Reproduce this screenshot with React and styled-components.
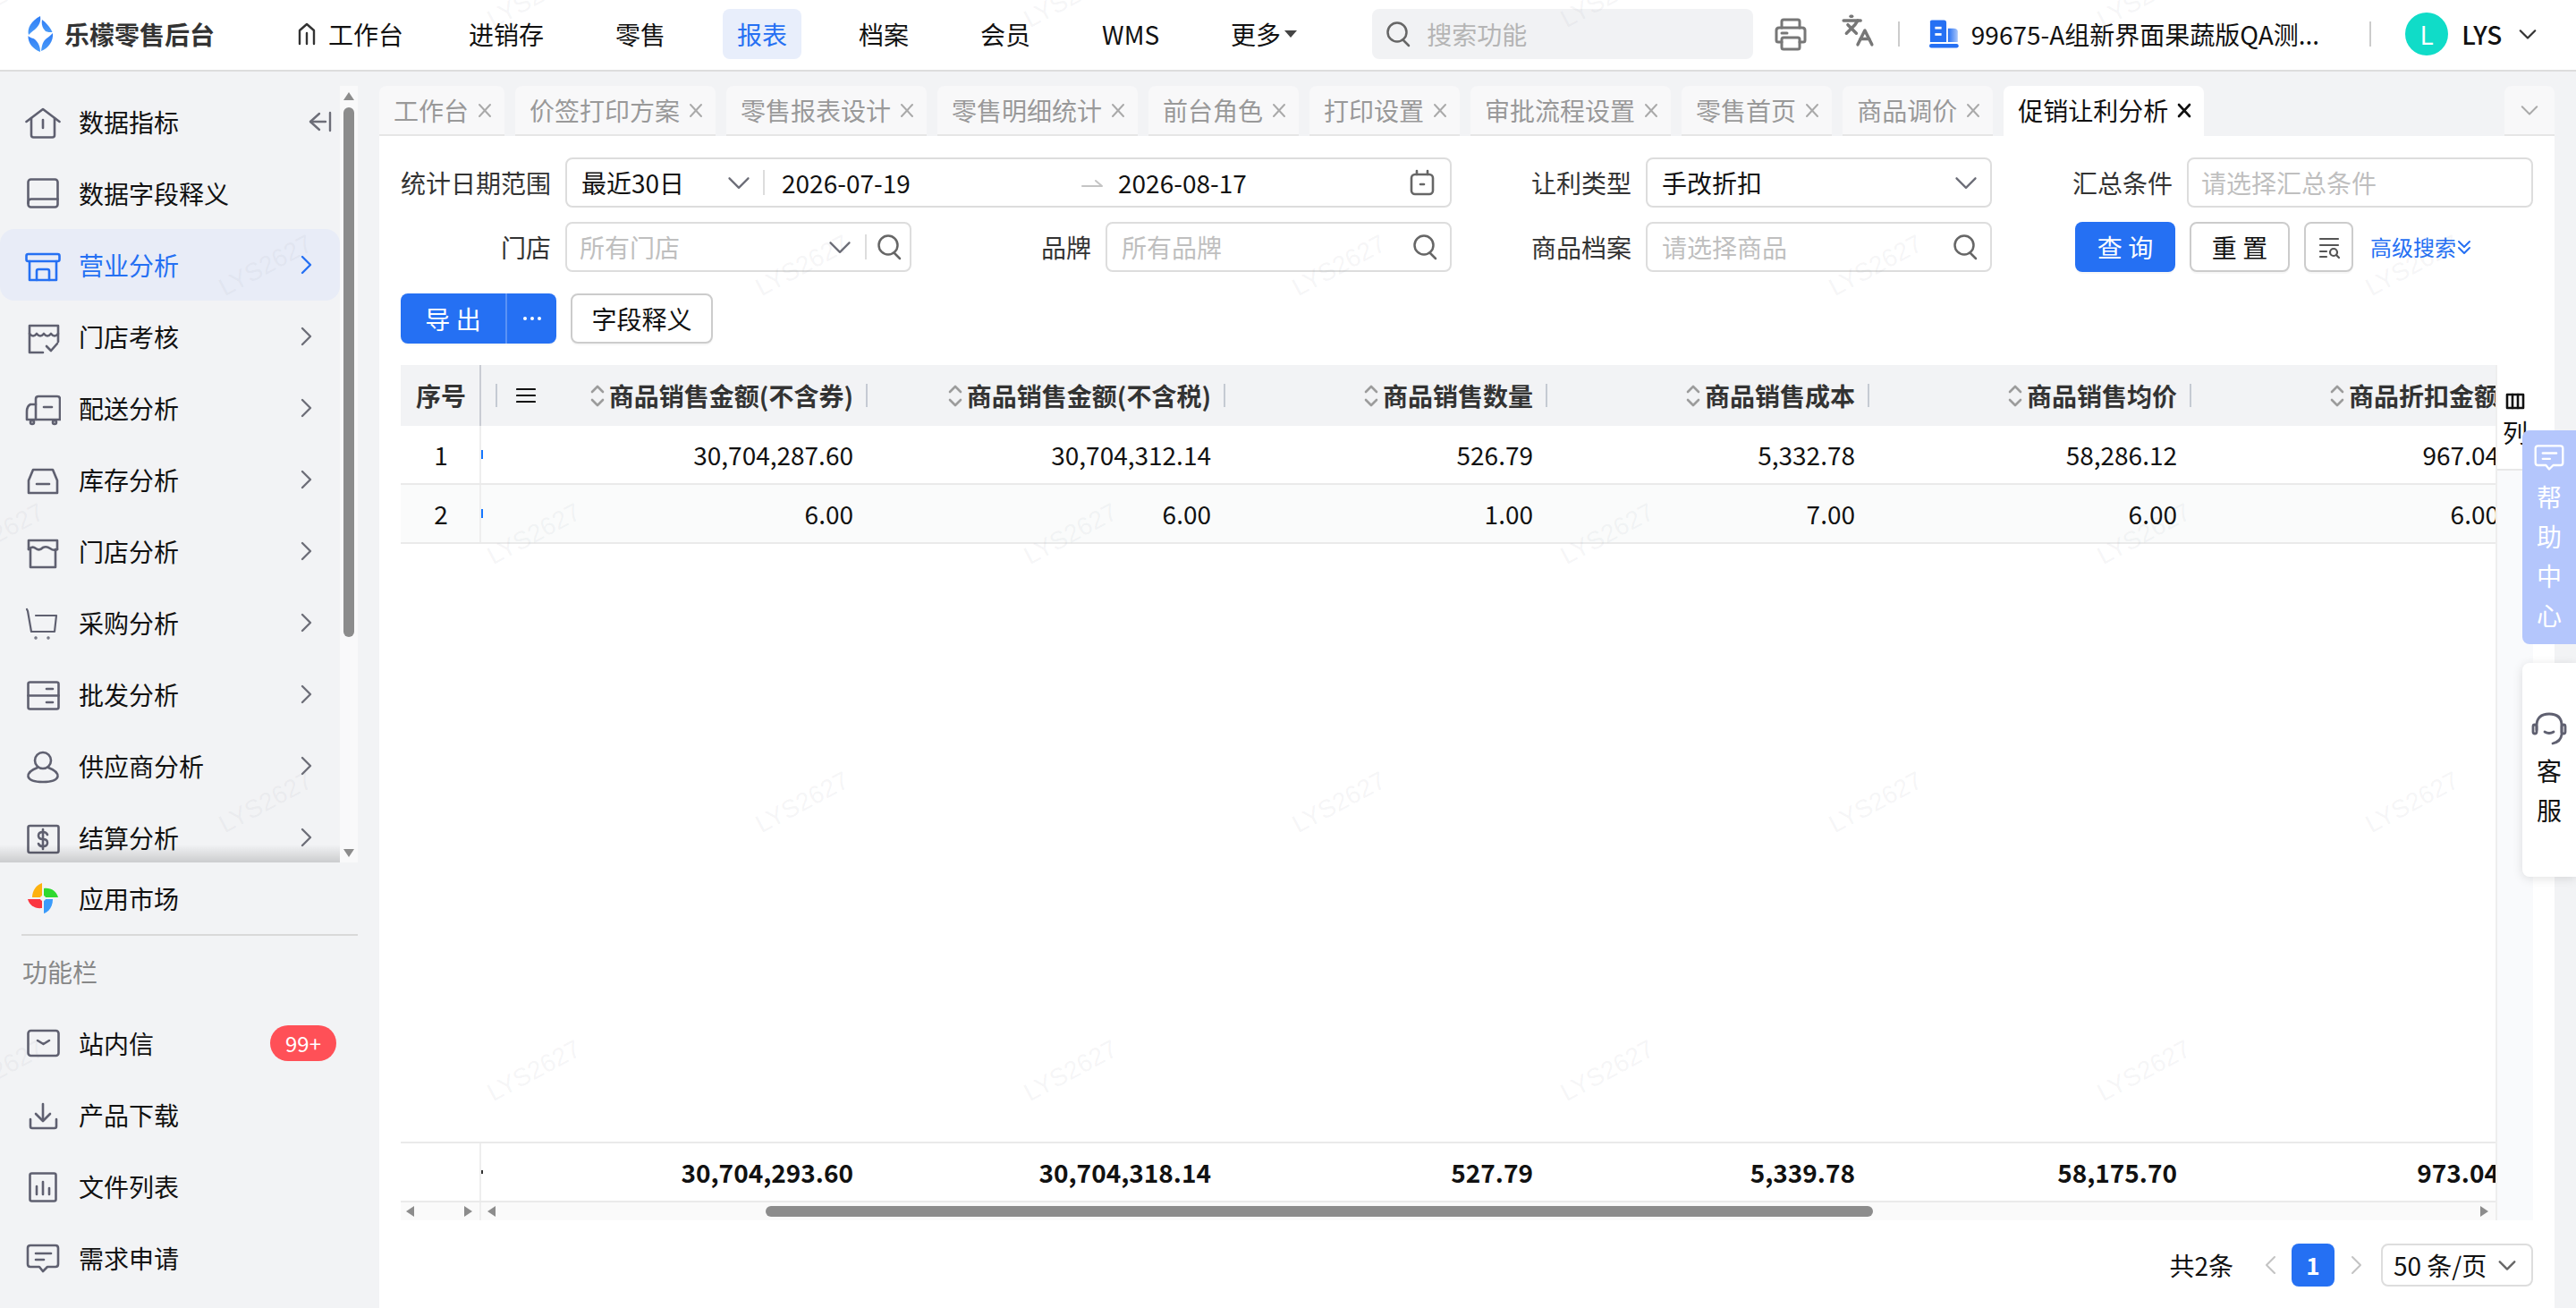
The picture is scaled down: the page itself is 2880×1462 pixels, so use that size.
import React from 'react'
import styled, { createGlobalStyle } from 'styled-components'
import { Languages } from 'lucide-react'

const BLUE = '#2570f3'
const FONT = '"Noto Sans CJK SC", "Noto Sans", sans-serif'

const GlobalStyle = createGlobalStyle`
	html, body {
		margin: 0;
		padding: 0;
		background: #fff;
	}
	* {
		box-sizing: border-box;
	}
`

// ---- icons

const Svg = ({ size = 40, box = 40, color = '#5f6070', sw = 2.6, children }) => (
	<svg
		width={size}
		height={size}
		viewBox={`0 0 ${box} ${box}`}
		fill='none'
		stroke={color}
		strokeWidth={sw}
		strokeLinecap='round'
		strokeLinejoin='round'
		style={{ flexShrink: 0, display: 'block' }}
	>
		{children}
	</svg>
)

const Logo = () => (
	<svg width='32' height='50' viewBox='10 5 32 50' style={{ flexShrink: 0 }}>
		<defs>
			<linearGradient id='logoBlue' x1='0' y1='0' x2='0' y2='1'>
				<stop offset='0' stopColor='#2f7df6' />
				<stop offset='1' stopColor='#4a9bf8' />
			</linearGradient>
		</defs>
		<g fill='url(#logoBlue)'>
			<path d='M25 10C26 16 24 20 19 25C16 27 14 29 12 31C10 24 15 15 25 10Z' />
			<path d='M27 14C31 17 36 22 38.5 28C36 28 33 28 31 27C28 24 26 20 27 14Z' />
			<path d='M11.5 32C14 35 17 34 19 36C23 40 25 44 25 50C17 47 11 40 11.5 32Z' />
			<path d='M39 29C40 38 34 46 26 49C27 42 28 38 32 35C35 33 37 31 39 29Z' />
		</g>
	</svg>
)

const HomeSmall = () => (
	<Svg size={26} box={26} color='#333' sw={2.4}>
		<path d='M5 24V9L13 2L21 9V24' />
		<path d='M13 12V24' />
	</Svg>
)

const icons = {
	home: (c) => (
		<Svg color={c}>
			<path d='M1.5 20L20 6L38.5 20' />
			<path d='M7 16V35Q7 37.5 9.5 37.5H30.5Q33 37.5 33 35V16' />
			<path d='M20 18V27' />
		</Svg>
	),
	book: (c) => (
		<Svg color={c}>
			<rect x='3.5' y='4.5' width='33' height='31' rx='3' />
			<path d='M3.5 31Q3.5 26.5 7 26.5H36.5' />
		</Svg>
	),
	store: (c) => (
		<Svg color={c}>
			<rect x='1.5' y='8' width='37' height='8' rx='2' />
			<path d='M5 16V37H35V16' />
			<path d='M13 37V27Q13 25 15 25H25Q27 25 27 27V37' />
		</Svg>
	),
	check: (c) => (
		<Svg color={c}>
			<path d='M20 38H5V8H37V26' />
			<path d='M5 17Q9 22 13 17Q17 22 21 17Q25 22 29 17Q33 22 37 17' />
			<path d='M24 31L29 36L36 28' />
		</Svg>
	),
	truck: (c) => (
		<Svg color={c}>
			<path d='M12 33V10Q12 7 15 7H36Q39 7 39 10V33H12Z' />
			<path d='M12 16H6Q2 18 2 24V33H12' />
			<path d='M21 19H30' />
			<circle cx='8' cy='36' r='2' />
			<circle cx='33' cy='36' r='2' />
		</Svg>
	),
	box: (c) => (
		<Svg color={c}>
			<path d='M9 9H31L36 21V35H4V21Z' />
			<path d='M13 25H27' />
		</Svg>
	),
	shop: (c) => (
		<Svg color={c}>
			<path d='M4 18V8H36V18' />
			<path d='M4 18Q8 14 12 17Q16 20 20 16Q24 14 28 17Q32 20 36 18' />
			<path d='M6 18V38H34V18' />
		</Svg>
	),
	cart: (c) => (
		<Svg color={c} sw={2.2}>
			<path d='M2 5L3 7L7 30H33L35 12H12' />
			<circle cx='12' cy='37' r='0.6' />
			<circle cx='26' cy='37' r='0.6' />
		</Svg>
	),
	drawer: (c) => (
		<Svg color={c}>
			<rect x='3.5' y='6.5' width='34' height='30' rx='2' />
			<path d='M3.5 21.5H37.5' />
			<path d='M24 14H31' />
			<path d='M24 29H31' />
		</Svg>
	),
	user: (c) => (
		<Svg color={c}>
			<circle cx='20' cy='14' r='9' />
			<path d='M14 22Q3 26 3.5 32Q5 38 20 38Q35 38 36.5 32Q37 26 26 22' />
		</Svg>
	),
	money: (c) => (
		<Svg color={c}>
			<rect x='3.5' y='7' width='34' height='30' rx='2' />
			<path d='M25 17Q24 14 20 14Q15 14 15 18Q15 22 20 22Q25 22 25 26Q25 30 20 30Q16 30 15 27' />
			<path d='M20 11V33' />
		</Svg>
	),
	mail: (c) => (
		<Svg color={c}>
			<rect x='3.5' y='6' width='34' height='28' rx='3' />
			<path d='M14 17L20.5 21L27 17' />
		</Svg>
	),
	download: (c) => (
		<Svg color={c}>
			<path d='M20 8V26' />
			<path d='M12 19L20 27L28 19' />
			<path d='M6 25V33Q6 35 8 35H33Q35 35 35 33V25' />
		</Svg>
	),
	chart: (c) => (
		<Svg color={c}>
			<rect x='5.5' y='5.5' width='29' height='31' rx='2' />
			<path d='M13 20V29' />
			<path d='M20 15V29' />
			<path d='M27 22V29' />
		</Svg>
	),
	comment: (c) => (
		<Svg color={c}>
			<path d='M6 6H34Q37 6 37 9V27Q37 30 34 30H25L20 35L16 30H6Q3 30 3 27V9Q3 6 6 6Z' />
			<path d='M12 15H29' />
			<path d='M12 22H21' />
		</Svg>
	),
	market: () => (
		<svg width='40' height='40' viewBox='0 0 40 40' style={{ display: 'block' }}>
			<path fill='#fdb10f' d='M19 19H8C8 11 13 5 19 3Z' />
			<path fill='#2fd92f' d='M21 19V9C29 8 35 12 37 19Z' />
			<path fill='#fb3640' d='M19 21V31C11 32 5 28 3 21Z' />
			<path fill='#3a9bfb' d='M21 21H31C31 29 27 35 21 37Z' />
			<circle cx='20' cy='20' r='3' fill='#f2f3f5' />
		</svg>
	)
}

const Chevron = ({ dir = 'right', color = '#6d6e78', size = 24, sw = 2.4 }) => {
	const d = {
		right: 'M8 3L17 12L8 21',
		left: 'M16 3L7 12L16 21',
		down: 'M3 8L12 17L21 8'
	}[dir]
	return (
		<Svg size={size} box={24} color={color} sw={sw}>
			<path d={d} />
		</Svg>
	)
}

const SearchGlass = ({ color = '#666' }) => (
	<Svg size={30} box={30} color={color} sw={2.5}>
		<circle cx='14' cy='13' r='10.5' />
		<path d='M21 22L27 28' />
	</Svg>
)

const CloseX = ({ color = '#aaa', sw = 2 }) => (
	<Svg size={18} box={18} color={color} sw={sw}>
		<path d='M3 3L15 16' />
		<path d='M15 3L3 16' />
	</Svg>
)

const SortArrows = () => (
	<svg
		width='20'
		height='28'
		viewBox='0 0 20 28'
		fill='none'
		stroke='#9c9c9c'
		strokeWidth='2.6'
		strokeLinecap='round'
		strokeLinejoin='round'
		style={{ flexShrink: 0, display: 'block' }}
	>
		<path d='M3 10L9 4L15 10' />
		<path d='M3 19L9 25L15 19' />
	</svg>
)

// ---- data

const navItems = ['进销存', '零售', '报表', '档案', '会员', 'WMS']

const tabs = [
	'工作台',
	'价签打印方案',
	'零售报表设计',
	'零售明细统计',
	'前台角色',
	'打印设置',
	'审批流程设置',
	'零售首页',
	'商品调价'
]

const menu = [
	{ icon: 'home', label: '数据指标', collapse: true },
	{ icon: 'book', label: '数据字段释义' },
	{ icon: 'store', label: '营业分析', arrow: true, active: true },
	{ icon: 'check', label: '门店考核', arrow: true },
	{ icon: 'truck', label: '配送分析', arrow: true },
	{ icon: 'box', label: '库存分析', arrow: true },
	{ icon: 'shop', label: '门店分析', arrow: true },
	{ icon: 'cart', label: '采购分析', arrow: true },
	{ icon: 'drawer', label: '批发分析', arrow: true },
	{ icon: 'user', label: '供应商分析', arrow: true },
	{ icon: 'money', label: '结算分析', arrow: true }
]

const tools = [
	{ icon: 'mail', label: '站内信', badge: '99+' },
	{ icon: 'download', label: '产品下载' },
	{ icon: 'chart', label: '文件列表' },
	{ icon: 'comment', label: '需求申请' }
]

const columns = [
	{ title: '商品销售金额(不含券)', width: 360, sep: true },
	{ title: '商品销售金额(不含税)', width: 400, sep: true },
	{ title: '商品销售数量', width: 360, sep: true },
	{ title: '商品销售成本', width: 360, sep: true },
	{ title: '商品销售均价', width: 360, sep: true },
	{ title: '商品折扣金额', width: 360 }
]

const rows = [
	['30,704,287.60', '30,704,312.14', '526.79', '5,332.78', '58,286.12', '967.04'],
	['6.00', '6.00', '1.00', '7.00', '6.00', '6.00']
]

const totals = ['30,704,293.60', '30,704,318.14', '527.79', '5,339.78', '58,175.70', '973.04']

// watermark grid: every 600px across, every 300px down, shifted on odd lines
const marks = []
for (let line = 0; line < 5; line++) {
	const shift = line % 2 === 0 ? -3 : 297
	for (let i = 0; i < 5; i++) {
		marks.push({ x: shift + i * 600, y: line * 300 - 3 })
	}
}

const Item = ({ item }) => (
	<MenuItem $active={item.active}>
		<IconSlot>{icons[item.icon](item.active ? BLUE : '#5f6070')}</IconSlot>
		<span>{item.label}</span>
		{item.arrow && (
			<Trail>
				<Chevron color={item.active ? BLUE : '#6d6e78'} />
			</Trail>
		)}
		{item.collapse && (
			<CollapseTrail>
				<Svg size={28} box={28} color='#6d6e78' sw={2.4}>
					<path d='M13 5L3 14L13 23' />
					<path d='M3 14H20' />
					<path d='M25 4V24' />
				</Svg>
			</CollapseTrail>
		)}
		{item.badge && <Badge>{item.badge}</Badge>}
	</MenuItem>
)

const App = () => {
	return (
		<Page>
			<GlobalStyle />
			<TopBar>
				<Logo />
				<Brand>乐檬零售后台</Brand>
				<Nav>
					<HomeNav>
						<HomeSmall />
						工作台
					</HomeNav>
					{navItems.map((name) => (
						<NavItem key={name} $active={name === '报表'}>
							{name}
						</NavItem>
					))}
					<NavItem>
						更多
						<Caret />
					</NavItem>
				</Nav>
				<SearchBox>
					<SearchGlass />
					<span>搜索功能</span>
				</SearchBox>
				<PrintIcon>
					<Svg size={38} box={38} color='#777' sw={3}>
						<path d='M9 12V5Q9 3 11 3H27Q29 3 29 5V12' />
						<path d='M9 28H5Q3 28 3 26V15Q3 12 6 12H32Q35 12 35 15V26Q35 28 33 28H29' />
						<rect x='9' y='23' width='20' height='13' rx='2' />
						<path d='M9 18H15' />
					</Svg>
				</PrintIcon>
				<TranslateIcon>
					<Languages size={38} color='#777' strokeWidth={2.2} />
				</TranslateIcon>
				<VLine $ml={26} />
				<Org>
					<svg width='36' height='36' viewBox='0 0 36 36'>
						<defs>
							<linearGradient id='orgFade' x1='0' y1='0' x2='1' y2='0'>
								<stop offset='0' stopColor='#2570f3' />
								<stop offset='1' stopColor='#a9c6fa' />
							</linearGradient>
						</defs>
						<path fill={BLUE} d='M1 28V3Q1 1 3 1H18Q21 1 21 4V28Z' />
						<path fill='url(#orgFade)' d='M23 11H30Q35 11 35 15V28H23Z' />
						<rect x='0' y='30' width='36' height='5' rx='2.5' fill={BLUE} />
						<rect x='7' y='9' width='8' height='3' fill='#fff' />
						<rect x='7' y='17' width='8' height='3' fill='#fff' />
					</svg>
					<span>99675-A组新界面果蔬版QA测...</span>
				</Org>
				<VLine $ml={56} />
				<Avatar>L</Avatar>
				<UserName>LYS</UserName>
				<UserChevron>
					<Chevron dir='down' color='#333' size={22} sw={2.4} />
				</UserChevron>
			</TopBar>

			<Body>
				<Side>
					<MenuScroll>
						<MenuList>
							{menu.map((item) => (
								<Item key={item.label} item={item} />
							))}
						</MenuList>
						<ScrollTrack>
							<ArrowUp />
							<ScrollThumb />
							<ArrowDown />
						</ScrollTrack>
					</MenuScroll>
					<Item item={{ icon: 'market', label: '应用市场' }} />
					<SideRule />
					<SideTitle>功能栏</SideTitle>
					{tools.map((item) => (
						<Item key={item.label} item={item} />
					))}
				</Side>

				<Main>
					<TabBar>
						{tabs.map((name) => (
							<Tab key={name}>
								{name}
								<CloseX />
							</Tab>
						))}
						<Tab $active>
							促销让利分析
							<CloseX color='#111' sw={2.6} />
						</Tab>
						<TabMore>
							<Chevron dir='down' color='#aaa' size={22} sw={2.2} />
						</TabMore>
					</TabBar>

					<Panel>
						<FilterRow>
							<Label $width={168}>统计日期范围</Label>
							<Control $width={991}>
								<Value $width={162}>最近30日</Value>
								<Chevron dir='down' size={28} sw={2} />
								<RangeLine $ml={13} />
								<DateStart>2026-07-19</DateStart>
								<Svg size={26} box={26} color='#c4c4c4' sw={2}>
									<path d='M2 17H24L17 11' />
								</Svg>
								<DateEnd>2026-08-17</DateEnd>
								<CalendarWrap>
									<Svg size={30} box={30} color='#666' sw={2.6}>
										<rect x='3' y='6' width='24' height='22' rx='4' />
										<path d='M9 2V6' />
										<path d='M21 2V6' />
										<path d='M13 17H17' />
									</Svg>
								</CalendarWrap>
							</Control>
							<Label $width={185}>让利类型</Label>
							<Control $width={387}>
								<Value>手改折扣</Value>
								<EndIcon>
									<Chevron dir='down' size={28} sw={2} />
								</EndIcon>
							</Control>
							<Label $width={186}>汇总条件</Label>
							<Control $width={387} $pl={14}>
								<Placeholder>请选择汇总条件</Placeholder>
							</Control>
						</FilterRow>

						<FilterRow>
							<Label $width={168}>门店</Label>
							<Control $width={387} $pl={14}>
								<Placeholder $width={277}>所有门店</Placeholder>
								<Chevron dir='down' size={28} sw={2} />
								<RangeLine $ml={14} />
								<SearchEnd>
									<SearchGlass />
								</SearchEnd>
							</Control>
							<Label $width={185}>品牌</Label>
							<Control $width={387}>
								<Placeholder>所有品牌</Placeholder>
								<EndIcon>
									<SearchGlass />
								</EndIcon>
							</Control>
							<Label $width={185}>商品档案</Label>
							<Control $width={387}>
								<Placeholder>请选择商品</Placeholder>
								<EndIcon>
									<SearchGlass />
								</EndIcon>
							</Control>
							<Actions>
								<PrimaryButton>查 询</PrimaryButton>
								<Button $width={112}>重 置</Button>
								<Button $width={55}>
									<Svg size={30} box={30} color='#555' sw={2.2}>
										<path d='M5 6H25' />
										<path d='M5 13H25' />
										<path d='M5 20H12' />
										<path d='M5 26H12' />
										<circle cx='20' cy='21' r='4' />
										<path d='M23 24L26 27' />
									</Svg>
								</Button>
								<AdvancedLink>
									高级搜索
									<Svg size={18} box={18} color={BLUE} sw={2}>
										<path d='M3 3L9 9L15 3' />
										<path d='M3 10L9 16L15 10' />
									</Svg>
								</AdvancedLink>
							</Actions>
						</FilterRow>

						<ToolRow>
							<SplitButton>
								<SplitMain>导 出</SplitMain>
								<SplitMore>
									<svg width='24' height='6' viewBox='0 0 24 6' fill='#fff'>
										<circle cx='4' cy='3' r='2' />
										<circle cx='12' cy='3' r='2' />
										<circle cx='20' cy='3' r='2' />
									</svg>
								</SplitMore>
							</SplitButton>
							<Button $width={159}>字段释义</Button>
						</ToolRow>

						<TableWrap>
							<TableMain>
								<HeadRow>
									<SeqHead>序号</SeqHead>
									<MenuCol>
										<HeadSep />
										<Svg size={22} box={22} color='#111' sw={2.2}>
											<path d='M1 4H21' />
											<path d='M1 11H21' />
											<path d='M1 18H21' />
										</Svg>
									</MenuCol>
									{columns.map((col) => (
										<HeadCell key={col.title} $width={col.width} $sep={col.sep}>
											<SortArrows />
											{col.title}
											{col.sep && <HeadSep $ml={12} />}
										</HeadCell>
									))}
								</HeadRow>
								{rows.map((row, i) => (
									<DataRow key={i} $even={i === 1}>
										<SeqCell>{i + 1}</SeqCell>
										<TickCell />
										{row.map((value, j) => (
											<DataCell key={j} $width={columns[j].width}>
												{value}
											</DataCell>
										))}
									</DataRow>
								))}
								<Filler />
								<TotalRow>
									<SeqCell />
									<TickCell $dark />
									{totals.map((value, j) => (
										<TotalCell key={j} $width={columns[j].width}>
											{value}
										</TotalCell>
									))}
								</TotalRow>
								<HScroll>
									<HScrollFixed>
										<TriLeft />
										<TriRight />
									</HScrollFixed>
									<HScrollTrack>
										<TriLeft />
										<HThumb />
										<TriRight />
									</HScrollTrack>
								</HScroll>
							</TableMain>
							<ColumnStrip>
								<ColumnButton>
									<Svg size={22} box={22} color='#111' sw={2.6}>
										<rect x='2' y='3' width='18' height='15' />
										<path d='M8 3V18' />
										<path d='M14 3V18' />
									</Svg>
									列
								</ColumnButton>
							</ColumnStrip>
						</TableWrap>

						<Pager>
							<PagerTotal>共2条</PagerTotal>
							<PagerPrev>
								<Chevron dir='left' color='#c4c4c4' size={24} sw={2} />
							</PagerPrev>
							<PagerCurrent>1</PagerCurrent>
							<PagerNext>
								<Chevron dir='right' color='#c4c4c4' size={24} sw={2} />
							</PagerNext>
							<PageSize>
								50 条/页
								<Chevron dir='down' color='#666' size={22} sw={2.6} />
							</PageSize>
						</Pager>
					</Panel>
				</Main>
			</Body>

			<HelpPanel>
				{icons.comment('#fff')}
				<Vertical>帮助中心</Vertical>
			</HelpPanel>
			<ServicePanel>
				<Svg size={40} box={40} color='#5f6070' sw={2.8}>
					<path d='M6 21V16Q6 3 20 3Q34 3 34 16V26Q33 34 24 36' />
					<rect x='2' y='15' width='4' height='10' rx='2' />
					<rect x='34' y='15' width='4' height='10' rx='2' />
					<path d='M15 23Q20 26 25 23' />
				</Svg>
				<Vertical>客服</Vertical>
			</ServicePanel>

			<WatermarkLayer>
				{marks.map((m) => (
					<Watermark key={`${m.x}-${m.y}`} style={{ left: m.x, top: m.y }}>
						LYS2627
					</Watermark>
				))}
			</WatermarkLayer>
		</Page>
	)
}

const Page = styled.div`
	position: relative;
	width: 2880px;
	height: 1462px;
	overflow: hidden;
	display: flex;
	flex-direction: column;
	font-family: ${FONT};
	font-size: 28px;
	line-height: 40px;
	color: #111;
	background: #f2f3f5;
`

const TopBar = styled.header`
	flex: 0 0 80px;
	display: flex;
	align-items: center;
	padding-left: 30px;
	background: #fff;
	border-bottom: 2px solid #ddd;
	padding-bottom: 2px;
`

const Brand = styled.div`
	margin-left: 10px;
	width: 168px;
	font-weight: 700;
	color: #333;
	white-space: nowrap;
`

const Nav = styled.nav`
	margin-left: 74px;
	display: flex;
	align-items: center;
	gap: 48px;
`

const NavItem = styled.div`
	height: 56px;
	padding: 0 16px;
	display: flex;
	align-items: center;
	border-radius: 8px;
	white-space: nowrap;
	color: ${(p) => (p.$active ? BLUE : '#111')};
	background: ${(p) => (p.$active ? '#e8eefb' : 'transparent')};
`

const HomeNav = styled(NavItem)`
	gap: 11px;
	margin-right: -7px;
`

const Caret = styled.span`
	margin-left: 4px;
	width: 0;
	height: 0;
	border-left: 7px solid transparent;
	border-right: 7px solid transparent;
	border-top: 8px solid #444;
`

const SearchBox = styled.div`
	margin-left: 68px;
	width: 426px;
	height: 56px;
	padding-left: 14px;
	display: flex;
	align-items: center;
	gap: 17px;
	border-radius: 8px;
	background: #f1f2f4;
	color: #b5b5b5;
`

const PrintIcon = styled.div`
	margin-left: 23px;
`

const TranslateIcon = styled.div`
	margin-left: 37px;
`

const VLine = styled.div`
	margin-left: ${(p) => p.$ml}px;
	width: 2px;
	height: 28px;
	background: #ccc;
`

const Org = styled.div`
	margin-left: 33px;
	width: 436px;
	display: flex;
	align-items: center;
	gap: 14px;
	white-space: nowrap;
`

const Avatar = styled.div`
	margin-left: 38px;
	width: 48px;
	height: 48px;
	border-radius: 50%;
	background: #10dcc8;
	color: #fff;
	display: flex;
	align-items: center;
	justify-content: center;
	font-size: 28px;
`

const UserName = styled.div`
	margin-left: 15px;
	font-weight: 500;
`

const UserChevron = styled.div`
	margin-left: 18px;
`

const Body = styled.div`
	flex: 1;
	min-height: 0;
	display: flex;
`

const Side = styled.aside`
	flex: 0 0 424px;
	padding-top: 16px;
	display: flex;
	flex-direction: column;
`

const MenuScroll = styled.div`
	position: relative;
	flex: 0 0 868px;
	width: 400px;
	display: flex;
	overflow: hidden;
	&::after {
		content: '';
		position: absolute;
		left: 0;
		right: 20px;
		bottom: 0;
		height: 20px;
		background: linear-gradient(rgba(0, 0, 0, 0), rgba(0, 0, 0, 0.16));
	}
`

const MenuList = styled.div`
	flex: 0 0 380px;
`

const ScrollTrack = styled.div`
	flex: 0 0 20px;
	height: 100%;
	background: #f9f9fa;
	display: flex;
	flex-direction: column;
	align-items: center;
	padding-top: 7px;
`

const ArrowUp = styled.div`
	width: 0;
	height: 0;
	border-left: 6px solid transparent;
	border-right: 6px solid transparent;
	border-bottom: 9px solid #8c8c8c;
`

const ArrowDown = styled.div`
	margin-top: auto;
	margin-bottom: 6px;
	width: 0;
	height: 0;
	border-left: 6px solid transparent;
	border-right: 6px solid transparent;
	border-top: 9px solid #8c8c8c;
`

const ScrollThumb = styled.div`
	margin-top: 8px;
	width: 12px;
	height: 592px;
	border-radius: 6px;
	background: #8c8c8c;
`

const MenuItem = styled.div`
	flex-shrink: 0;
	max-width: 400px;
	height: 80px;
	display: flex;
	align-items: center;
	gap: 20px;
	padding: 0 24px 0 28px;
	white-space: nowrap;
	border-radius: 16px;
	color: ${(p) => (p.$active ? BLUE : '#111')};
	background: ${(p) => (p.$active ? '#e8ecf7' : 'transparent')};
`

const IconSlot = styled.div`
	flex: 0 0 40px;
`

const Trail = styled.div`
	margin-left: auto;
	margin-right: 2px;
`

const CollapseTrail = styled.div`
	margin-left: auto;
	margin-right: -16px;
`

const Badge = styled.div`
	margin-left: auto;
	width: 74px;
	height: 40px;
	border-radius: 20px;
	background: #ff5057;
	color: #fff;
	font-size: 24px;
	line-height: 40px;
	text-align: center;
`

const SideRule = styled.div`
	flex-shrink: 0;
	margin: 0 24px;
	height: 2px;
	background: #d9d9d9;
`

const SideTitle = styled.div`
	flex: 0 0 80px;
	padding-left: 25px;
	display: flex;
	align-items: center;
	color: #888;
`

const Main = styled.main`
	flex: 0 0 2432px;
	padding-top: 16px;
	display: flex;
	flex-direction: column;
`

const TabBar = styled.div`
	flex: 0 0 56px;
	display: flex;
	gap: 12px;
`

const Tab = styled.div`
	display: flex;
	align-items: center;
	gap: 9px;
	padding: 0 13px 0 16px;
	white-space: nowrap;
	border-radius: 8px 8px 0 0;
	color: ${(p) => (p.$active ? '#111' : '#999')};
	background: ${(p) => (p.$active ? '#fff' : '#f8f8f9')};
	border-bottom: 2px solid ${(p) => (p.$active ? '#fff' : '#e6e6e6')};
`

const TabMore = styled.div`
	margin-left: auto;
	width: 56px;
	display: flex;
	align-items: center;
	justify-content: center;
	border-radius: 8px 8px 0 0;
	background: #f8f8f9;
	border-bottom: 2px solid #e6e6e6;
`

const Panel = styled.div`
	flex: 1;
	min-height: 0;
	padding: 24px 24px 0 24px;
	display: flex;
	flex-direction: column;
	background: #fff;
`

const FilterRow = styled.div`
	flex: 0 0 56px;
	margin-bottom: 16px;
	display: flex;
	align-items: center;
	gap: 16px;
`

const Label = styled.label`
	flex: 0 0 ${(p) => p.$width}px;
	text-align: right;
	white-space: nowrap;
	color: #333;
`

const Control = styled.div`
	flex: 0 0 ${(p) => p.$width}px;
	height: 56px;
	display: flex;
	align-items: center;
	padding-left: ${(p) => p.$pl || 16}px;
	border: 2px solid #ddd;
	border-radius: 8px;
	background: #fff;
`

const Value = styled.span`
	white-space: nowrap;
	${(p) => p.$width && `width: ${p.$width}px;`}
`

const Placeholder = styled(Value)`
	color: #bfbfbf;
`

const RangeLine = styled.div`
	margin-left: ${(p) => p.$ml}px;
	width: 2px;
	height: 28px;
	background: #ddd;
`

const DateStart = styled.span`
	margin-left: 19px;
	width: 334px;
`

const DateEnd = styled.span`
	margin-left: 16px;
`

const CalendarWrap = styled.div`
	margin-left: auto;
	margin-right: 16px;
`

const EndIcon = styled.div`
	margin-left: auto;
	margin-right: 13px;
`

const SearchEnd = styled.div`
	margin-left: 10px;
`

const Actions = styled.div`
	margin-left: 77px;
	display: flex;
	align-items: center;
	gap: 16px;
`

const Button = styled.button`
	width: ${(p) => p.$width}px;
	height: 56px;
	padding: 0;
	display: flex;
	align-items: center;
	justify-content: center;
	border: 2px solid #ccc;
	border-radius: 8px;
	background: #fff;
	color: #111;
	font: inherit;
	box-shadow: 0 2px 0 rgba(0, 0, 0, 0.03);
`

const PrimaryButton = styled(Button)`
	width: 112px;
	border: none;
	background: ${BLUE};
	color: #fff;
`

const AdvancedLink = styled.a`
	margin-left: 3px;
	display: flex;
	align-items: center;
	color: ${BLUE};
	font-size: 24px;
	white-space: nowrap;
`

const ToolRow = styled.div`
	flex: 0 0 56px;
	margin-top: 8px;
	display: flex;
	gap: 16px;
`

const SplitButton = styled.div`
	width: 174px;
	height: 56px;
	display: flex;
	border-radius: 8px;
	overflow: hidden;
	background: ${BLUE};
	color: #fff;
	box-shadow: 0 2px 0 rgba(0, 0, 0, 0.03);
`

const SplitMain = styled.div`
	flex: 0 0 119px;
	display: flex;
	align-items: center;
	justify-content: center;
	border-right: 2px solid #5a92f6;
`

const SplitMore = styled.div`
	flex: 1;
	display: flex;
	align-items: center;
	justify-content: center;
`

const TableWrap = styled.div`
	flex: 0 0 956px;
	margin-top: 24px;
	display: flex;
`

const TableMain = styled.div`
	flex: 0 0 2344px;
	display: flex;
	flex-direction: column;
	overflow: hidden;
	border-right: 2px solid #eee;
`

const HeadRow = styled.div`
	flex: 0 0 68px;
	display: flex;
	background: #f2f3f5;
	font-weight: 700;
	color: #333;
`

const SeqHead = styled.div`
	flex: 0 0 90px;
	padding-left: 2px;
	display: flex;
	align-items: center;
	justify-content: center;
	border-right: 2px solid #c9ccd3;
`

const MenuCol = styled.div`
	flex: 0 0 72px;
	display: flex;
	align-items: center;
	gap: 21px;
	padding-left: 16px;
`

const HeadSep = styled.div`
	flex-shrink: 0;
	margin-left: ${(p) => p.$ml || 0}px;
	width: 2px;
	height: 26px;
	background: #c5cad3;
`

const HeadCell = styled.div`
	flex: 0 0 ${(p) => p.$width}px;
	padding-right: ${(p) => (p.$sep ? 0 : 16)}px;
	display: flex;
	align-items: center;
	justify-content: flex-end;
	gap: 2px;
	white-space: nowrap;
`

const DataRow = styled.div`
	flex: 0 0 66px;
	display: flex;
	align-items: center;
	border-bottom: 2px solid #eaeaea;
	background: ${(p) => (p.$even ? '#fafbfb' : '#fff')};
`

const SeqCell = styled.div`
	flex: 0 0 90px;
	padding-left: 2px;
	align-self: stretch;
	display: flex;
	align-items: center;
	justify-content: center;
	border-right: 2px solid #eee;
`

const TickCell = styled.div`
	flex: 0 0 72px;
	align-self: stretch;
	display: flex;
	align-items: center;
	&::before {
		content: '';
		width: 2px;
		height: ${(p) => (p.$dark ? 4 : 10)}px;
		background: ${(p) => (p.$dark ? '#333' : '#1677ff')};
	}
`

const DataCell = styled.div`
	flex: 0 0 ${(p) => p.$width}px;
	padding-right: 16px;
	text-align: right;
	white-space: nowrap;
`

const TotalCell = styled(DataCell)`
	font-weight: 700;
`

const Filler = styled.div`
	flex: 1;
`

const TotalRow = styled.div`
	flex: 0 0 68px;
	display: flex;
	align-items: center;
	border-top: 2px solid #eaeaea;
	border-bottom: 2px solid #eaeaea;
`

const HScroll = styled.div`
	flex: 0 0 20px;
	display: flex;
	background: #fafafa;
`

const HScrollFixed = styled.div`
	flex: 0 0 90px;
	padding: 0 8px 0 6px;
	display: flex;
	align-items: center;
	justify-content: space-between;
	border-right: 2px solid #eee;
`

const HScrollTrack = styled.div`
	flex: 1;
	padding: 0 8px 0 7px;
	display: flex;
	align-items: center;
`

const TriLeft = styled.div`
	width: 0;
	height: 0;
	border-top: 6px solid transparent;
	border-bottom: 6px solid transparent;
	border-right: 9px solid #8c8c8c;
`

const TriRight = styled.div`
	margin-left: auto;
	width: 0;
	height: 0;
	border-top: 6px solid transparent;
	border-bottom: 6px solid transparent;
	border-left: 9px solid #8c8c8c;
`

const HThumb = styled.div`
	margin-left: 302px;
	width: 1238px;
	height: 12px;
	border-radius: 6px;
	background: #8c8c8c;
`

const ColumnStrip = styled.div`
	flex: 0 0 40px;
	background: #f9fafc;
`

const ColumnButton = styled.div`
	height: 118px;
	padding-top: 30px;
	display: flex;
	flex-direction: column;
	align-items: center;
	gap: 8px;
	border-bottom: 2px solid #e8e8e8;
	background: #fff;
	line-height: 30px;
`

const Pager = styled.div`
	margin-top: 26px;
	display: flex;
	align-items: center;
	justify-content: flex-end;
`

const PagerTotal = styled.div`
	margin-right: 30px;
`

const PagerPrev = styled.div`
	margin-right: 11px;
`

const PagerNext = styled.div`
	margin: 0 6px 0 12px;
`

const PagerCurrent = styled.div`
	width: 48px;
	height: 48px;
	display: flex;
	align-items: center;
	justify-content: center;
	border-radius: 8px;
	background: ${BLUE};
	color: #fff;
	font-size: 26px;
	font-weight: 700;
`

const PageSize = styled.div`
	margin-left: 10px;
	width: 170px;
	height: 48px;
	padding: 0 16px 0 12px;
	display: flex;
	align-items: center;
	justify-content: space-between;
	border: 2px solid #ddd;
	border-radius: 8px;
	white-space: nowrap;
`

const FloatPanel = styled.div`
	position: absolute;
	right: 0;
	width: 60px;
	height: 239px;
	display: flex;
	flex-direction: column;
	align-items: center;
	justify-content: center;
	border-radius: 8px 0 0 8px;
`

const HelpPanel = styled(FloatPanel)`
	top: 481px;
	background: #b4c6fc;
	color: #fff;
	svg {
		width: 36px;
		height: 36px;
	}
`

const ServicePanel = styled(FloatPanel)`
	top: 741px;
	background: #fff;
	box-shadow: 0 2px 12px rgba(0, 0, 0, 0.12);
`

const Vertical = styled.div`
	width: 28px;
	margin-top: 4px;
	line-height: 44px;
	text-align: center;
`

const WatermarkLayer = styled.div`
	position: absolute;
	inset: 0;
	pointer-events: none;
	overflow: hidden;
`

const Watermark = styled.div`
	position: absolute;
	transform: translate(-50%, -50%) rotate(-28deg);
	font-family: 'Liberation Sans', sans-serif;
	font-size: 28px;
	line-height: 32px;
	color: rgba(120, 125, 140, 0.08);
	white-space: nowrap;
`

export default App
